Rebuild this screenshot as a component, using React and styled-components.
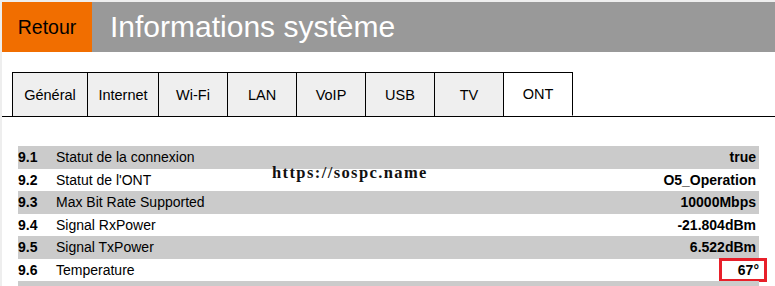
import React from 'react';
import styled, { createGlobalStyle } from 'styled-components';

// * ----------- STYLE ---------- *
const GlobalStyle = createGlobalStyle`
  html, body {
    margin: 0;
    padding: 0;
    background: #ffffff;
    font-family: "Liberation Sans", Arial, sans-serif;
  }
`

const Page = styled.div`
  position: relative;
  height: 284px;
  overflow: hidden;
  border-top: 2px solid #eeeeee;
  border-left: 2px solid #eeeeee;
  background: #ffffff;
`

const Header = styled.header`
  display: flex;
  height: 50px;
  background: #999999;
`

const BackButton = styled.div`
  display: flex;
  align-items: center;
  justify-content: center;
  width: 90px;
  background: #f16e00;
  color: #000000;
  font-size: 19.5px;
`

const Title = styled.h1`
  margin: 0;
  padding-left: 18px;
  display: flex;
  align-items: center;
  color: #ffffff;
  font-size: 30px;
  font-weight: normal;
`

const TabBar = styled.nav`
  display: flex;
  margin-top: 20px;
  padding-left: 10px;
  border-bottom: 1px solid #000000;
  height: 44px;
`

const Tab = styled.div`
  display: flex;
  align-items: center;
  justify-content: center;
  min-width: ${p => p.$w || 68}px;
  height: 44px;
  box-sizing: border-box;
  border: 1px solid #000000;
  border-left-width: ${p => (p.$first ? 1 : 0)}px;
  border-bottom: ${p => (p.$active ? '1px solid #ffffff' : 'none')};
  background: ${p => (p.$active ? '#ffffff' : '#efefef')};
  color: #000000;
  font-size: 14.5px;
`

const InfoTable = styled.div`
  margin: 29px 16px 0 16px;
  display: flex;
  flex-direction: column;
`

const Row = styled.div`
  display: flex;
  align-items: center;
  height: 22.5px;
  background: ${p => (p.$odd ? '#cbcbcb' : '#ffffff')};
  font-size: 14px;
  color: #000000;
`

const Num = styled.span`
  width: 38px;
  font-weight: bold;
`

const Label = styled.span`
  flex: 1;
`

const Value = styled.span`
  font-weight: bold;
  border: 3px solid ${p => (p.$highlight ? '#e8202a' : 'transparent')};
  margin-right: ${p => (p.$highlight ? -8 : 0)}px;
  padding-right: ${p => (p.$highlight ? 5 : 0)}px;
  padding-left: ${p => (p.$highlight ? 16 : 0)}px;
  line-height: 18px;
`

const Watermark = styled.div`
  position: absolute;
  left: 270px;
  top: 161px;
  font-family: "Liberation Serif", "Times New Roman", serif;
  font-weight: bold;
  font-size: 16.5px;
  color: #111111;
  letter-spacing: 1.4px;
`

const tabs = [
    { name: 'Général', w: 76 },
    { name: 'Internet', w: 71 },
    { name: 'Wi-Fi', w: 69 },
    { name: 'LAN', w: 69 },
    { name: 'VoIP', w: 69 },
    { name: 'USB', w: 69 },
    { name: 'TV', w: 69 },
    { name: 'ONT', w: 69, active: true },
]

const rows = [
    ['9.1', 'Statut de la connexion', 'true'],
    ['9.2', "Statut de l'ONT", 'O5_Operation'],
    ['9.3', 'Max Bit Rate Supported', '10000Mbps'],
    ['9.4', 'Signal RxPower', '-21.804dBm'],
    ['9.5', 'Signal TxPower', '6.522dBm'],
    ['9.6', 'Temperature', '67°', true],
    ['', '', ''],
]

const App = () => {
    return (
        <Page>
            <GlobalStyle />
            <Header>
                <BackButton>Retour</BackButton>
                <Title>Informations système</Title>
            </Header>
            <TabBar>
                { tabs.map((t, i) => (
                    <Tab key={ t.name } $w={ t.w } $first={ i === 0 } $active={ t.active }>{ t.name }</Tab>
                )) }
            </TabBar>
            <InfoTable>
                { rows.map((r, i) => (
                    <Row key={ i } $odd={ i % 2 === 0 }>
                        <Num>{ r[0] }</Num>
                        <Label>{ r[1] }</Label>
                        <Value $highlight={ r[3] }>{ r[2] }</Value>
                    </Row>
                )) }
            </InfoTable>
            <Watermark>https://sospc.name</Watermark>
        </Page>
    );
};

export default App;
